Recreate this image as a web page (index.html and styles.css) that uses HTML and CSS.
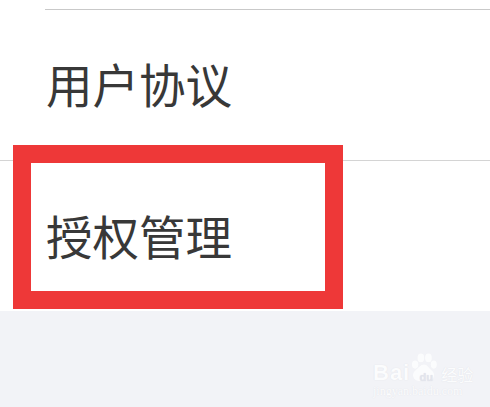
FILE: index.html
```html
<!DOCTYPE html>
<html lang="en">
<head>
  <meta charset="UTF-8">
  <title>授权管理</title>
  <link rel="stylesheet" href="styles.css">
</head>
<body>
  <div class="list">
    <div class="row">用户协议</div>
    <div class="row">授权管理</div>
    <div class="highlight"></div>
  </div>

  <div class="watermark">
    <div class="wm-top">
      <span class="wm-bai">Bai</span>
      <svg class="wm-paw" width="28" height="32" viewBox="0 0 30 36">
        <ellipse cx="5" cy="13" rx="3.6" ry="4.6" />
        <ellipse cx="11.5" cy="5.5" rx="3.8" ry="4.8" />
        <ellipse cx="20" cy="5.5" rx="3.8" ry="4.8" />
        <ellipse cx="26" cy="13" rx="3.4" ry="4.6" />
        <path d="M15 13c4 0 5 4 8 6 3 2 4 5 3 8-1 4-5 5-8 4-2-.5-4-.5-6 0-3 1-8 0-9-4-1-3 0-6 3-8 3-2 5-6 9-6z" />
      </svg>
      <span class="wm-du">du</span>
      <span class="wm-cn">经验</span>
    </div>
    <div class="wm-url">jingyan.baidu.com</div>
  </div>
</body>
</html>
```

FILE: styles.css
```css
body {
  margin: 0;
  height: 407px;
  overflow: hidden;
  background-color: #f2f3f7;
  font-family: "Noto Sans CJK SC", "Liberation Sans", sans-serif;
}

.list {
  position: relative;
  height: 311px;
  padding-top: 9px;
  padding-left: 45px;
  box-sizing: border-box;
  background-color: #fff;
}

.row {
  height: 146px;
  padding-bottom: 4px;
  padding-left: 1px;
  border-top: 1px solid #c9c9c9;
  display: flex;
  align-items: center;
  font-size: 46.5px;
  line-height: 1;
  color: #383838;
}

.row + .row {
  height: 148px;
  padding-bottom: 2px;
  margin-left: -45px;
  padding-left: 46px;
  border-top-color: #d4d4d4;
}

.highlight {
  position: absolute;
  left: 13px;
  top: 145px;
  width: 294px;
  height: 128px;
  border: 18px solid #ee3838;
}

.watermark {
  position: absolute;
  left: 373px;
  top: 353px;
  width: 105px;
  color: #fff;
  opacity: 0.75;
  text-shadow: 0 0 1px #d5d7de;
}

.wm-top {
  display: flex;
  align-items: flex-end;
  height: 32px;
  font-family: "Liberation Sans", sans-serif;
  font-weight: bold;
}

.wm-bai {
  font-size: 22px;
  line-height: 24px;
  letter-spacing: 1px;
}

.wm-paw {
  fill: #fff;
  margin-right: -24px;
}

.wm-du {
  font-size: 11px;
  line-height: 16px;
  width: 24px;
  text-align: center;
  color: #dfe1ea;
}

.wm-cn {
  font-family: "Noto Sans CJK SC", sans-serif;
  font-weight: normal;
  font-size: 16px;
  line-height: 22px;
  margin-left: 3px;
  white-space: nowrap;
}

.wm-url {
  font-family: "Liberation Serif", serif;
  font-size: 12px;
  line-height: 14px;
  margin-top: -1px;
  white-space: nowrap;
}
```
